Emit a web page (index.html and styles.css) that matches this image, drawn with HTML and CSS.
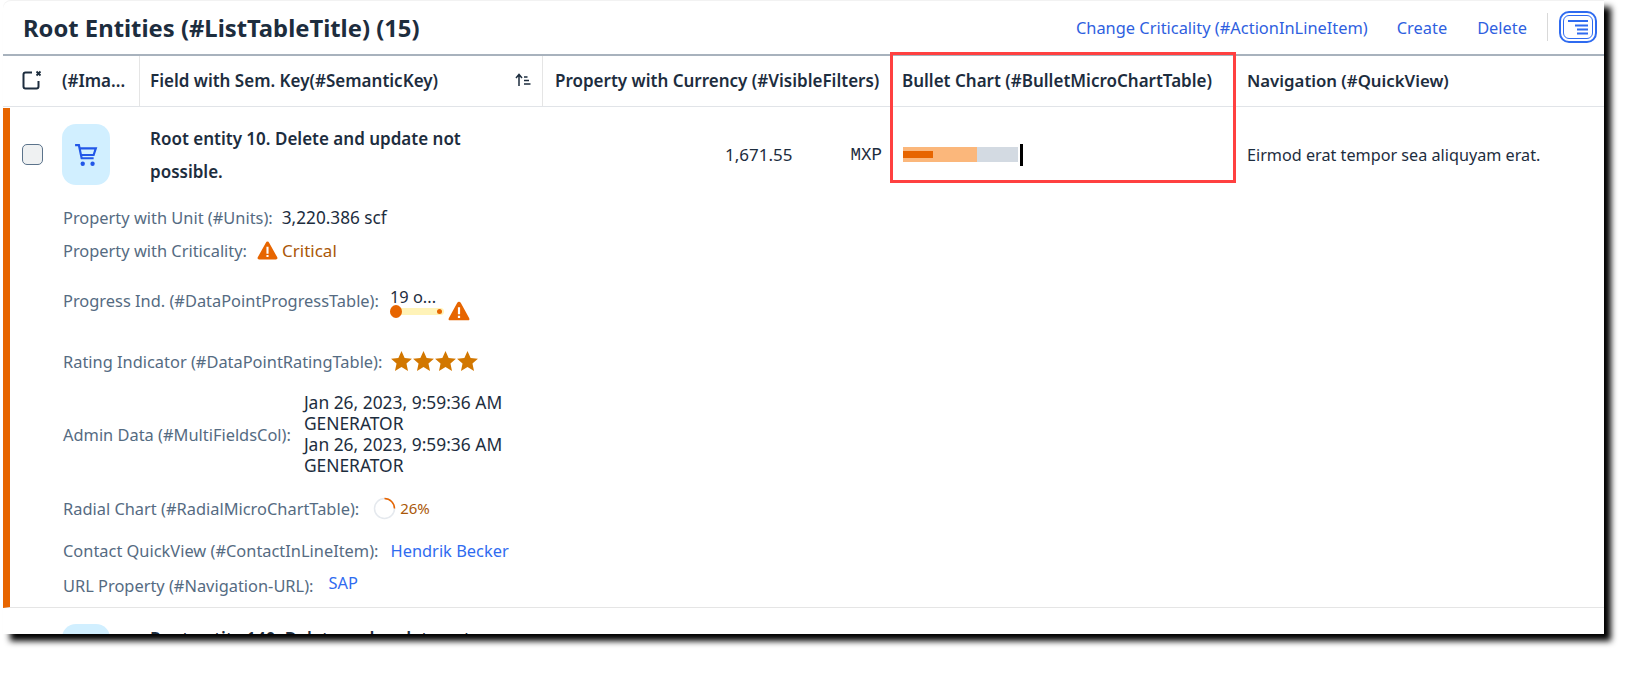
FILE: index.html
```html
<!DOCTYPE html>
<html lang="en">
<head>
<meta charset="utf-8">
<title>Root Entities</title>
<link rel="stylesheet" href="styles.css">
</head>
<body>
<main class="panel">
  <header class="toolbar">
    <h1 class="title">Root Entities (#ListTableTitle) (15)</h1>
    <nav class="actions">
      <a class="action">Change Criticality (#ActionInLineItem)</a>
      <a class="action">Create</a>
      <a class="action">Delete</a>
      <span class="tsep"></span>
      <button class="viewbtn" aria-label="View settings">
        <svg width="20" height="15" viewBox="0 0 20 15"><path d="M0 1h20M7 5.500h13M9 9.500h11M9 13.500h11" stroke="#2f6bf0" stroke-width="2" fill="none"/></svg>
      </button>
    </nav>
  </header>

  <div class="cols head">
    <div class="hcell first">
      <svg class="clear" width="21" height="20" viewBox="0 0 21 20"><path d="M10 2.500H3.500Q1.500 2.500 1.500 4.500V16.500Q1.500 18.500 3.500 18.500H14.500Q16.500 18.500 16.500 16.500V11" stroke="#1d2d3e" stroke-width="2" fill="none"/><path d="M14.500 1.500l4 4M18.500 1.500l-4 4" stroke="#1d2d3e" stroke-width="1.800"/></svg>
      <span class="imgh">(#Ima...</span>
    </div>
    <div class="hcell key">
      <span>Field with Sem. Key(#SemanticKey)</span>
      <svg width="16" height="14" viewBox="0 0 16 14"><path d="M4 13V2M1 5l3-3.500L7 5" stroke="#1d2d3e" stroke-width="1.500" fill="none"/><path d="M9 4h3.500M9 7.500h5M9 11h6.500" stroke="#1d2d3e" stroke-width="1.300"/></svg>
    </div>
    <div class="hcell wide">Property with Currency (#VisibleFilters)</div>
    <div class="hcell">Bullet Chart (#BulletMicroChartTable)</div>
    <div class="hcell last">Navigation (#QuickView)</div>
  </div>

  <section class="row critical">
    <div class="cols main">
      <div class="cell first">
        <span class="check"></span>
        <span class="avatar">
          <svg width="24" height="24" viewBox="0 0 22 22"><path d="M1 2h3.500L7 14h11M5 5h15l-2 6H6.500" stroke="#2257e8" stroke-width="2" fill="none"/><circle cx="8" cy="19" r="2" fill="#2257e8"/><circle cx="17" cy="19" r="2" fill="#2257e8"/></svg>
        </span>
      </div>
      <div class="cell name">Root entity 10. Delete and update not possible.</div>
      <div class="cell money"><span>1,671.55</span><span class="cur">MXP</span></div>
      <div class="cell bullet">
        <div class="bar">
          <span class="range"></span>
          <span class="value"></span>
          <span class="target"></span>
        </div>
      </div>
      <div class="cell nav">Eirmod erat tempor sea aliquyam erat.</div>
    </div>
    <div class="details">
      <div class="d d-unit"><span class="l">Property with Unit (#Units):</span><span class="v">3,220.386 scf</span></div>
      <div class="d d-crit"><span class="l">Property with Criticality:</span>
        <svg class="warn" width="21" height="19" viewBox="0 0 20 18"><path d="M10 .5Q11 .500 11.700 1.800L19.300 15.500Q20 17.500 18 17.500H2Q0 17.500 .7 15.500L8.300 1.800Q9 .5 10 .5Z" fill="#e76500"/><path d="M9 5.500h2v6.500H9zM9 13.300h2v2H9z" fill="#fff"/></svg>
        <span class="crit">Critical</span></div>
      <div class="d d-prog"><span class="l">Progress Ind. (#DataPointProgressTable):</span>
        <div class="prog">
          <span class="ptext">19 o...</span>
          <span class="ptrack"><i class="pstart"></i><i class="pend"></i></span>
        </div>
        <svg class="warn pw" width="22" height="20" viewBox="0 0 20 18"><path d="M10 .5Q11 .500 11.700 1.800L19.300 15.500Q20 17.500 18 17.500H2Q0 17.500 .7 15.500L8.300 1.800Q9 .5 10 .5Z" fill="#e76500"/><path d="M9 5.500h2v6.500H9zM9 13.300h2v2H9z" fill="#fff"/></svg>
      </div>
      <div class="d d-rate"><span class="l">Rating Indicator (#DataPointRatingTable):</span>
        <span class="stars">
          <svg width="21" height="20" viewBox="0 0 24 23"><path d="M12 0l3.600 8 8.400.8-6.300 5.700L19.500 23 12 18.500 4.500 23l1.800-8.500L0 8.800 8.400 8z" fill="#d27700"/></svg>
          <svg width="21" height="20" viewBox="0 0 24 23"><path d="M12 0l3.600 8 8.400.8-6.300 5.700L19.500 23 12 18.500 4.500 23l1.800-8.500L0 8.800 8.400 8z" fill="#d27700"/></svg>
          <svg width="21" height="20" viewBox="0 0 24 23"><path d="M12 0l3.600 8 8.400.8-6.300 5.700L19.500 23 12 18.500 4.500 23l1.800-8.500L0 8.800 8.400 8z" fill="#d27700"/></svg>
          <svg width="21" height="20" viewBox="0 0 24 23"><path d="M12 0l3.600 8 8.400.8-6.300 5.700L19.500 23 12 18.500 4.500 23l1.800-8.500L0 8.800 8.400 8z" fill="#d27700"/></svg>
        </span></div>
      <div class="d d-admin"><span class="l">Admin Data (#MultiFieldsCol):</span>
        <div class="multi"><span>Jan 26, 2023, 9:59:36 AM</span><span>GENERATOR</span><span>Jan 26, 2023, 9:59:36 AM</span><span>GENERATOR</span></div></div>
      <div class="d d-radial"><span class="l">Radial Chart (#RadialMicroChartTable):</span>
        <svg class="radial" width="23" height="23" viewBox="0 0 23 23"><circle cx="11.500" cy="11.500" r="10" fill="none" stroke="#e5e9ee" stroke-width="1.500"/><path d="M11.500 1.500A10 10 0 0 1 21.500 11.500" fill="none" stroke="#e76500" stroke-width="1.500"/></svg>
        <span class="pct">26%</span></div>
      <div class="d d-contact"><span class="l">Contact QuickView (#ContactInLineItem):</span><a class="link">Hendrik Becker</a></div>
      <div class="d d-url"><span class="l">URL Property (#Navigation-URL):</span><a class="link sap">SAP</a></div>
    </div>
  </section>

  <section class="row nextrow">
    <div class="cols main">
      <div class="cell first"><span class="avatar"></span></div>
      <div class="cell name">Root entity 140. Delete and update not possible.</div>
    </div>
  </section>

  <div class="highlight"></div>
</main>
</body>
</html>
```
FILE: styles.css
```css
* { box-sizing: border-box; }
html, body { margin: 0; background: #fff; }
body {
  padding: 0 0 0 3px;
  font-family: "Noto Sans", "Liberation Sans", sans-serif;
  font-size: 16.4px;
  color: #1d2d3e;
  height: 674px;
  overflow: hidden;
}
.panel {
  position: relative;
  width: 1601px;
  height: 634px;
  overflow: hidden;
  background: #fff;
  border-top-left-radius: 8px;
  box-shadow: 7px 7px 6px #000, inset 0 1px 0 #f2f2f2;
}
.toolbar {
  height: 56px;
  display: flex;
  align-items: center;
  justify-content: space-between;
  padding: 0 7px 0 20px;
  border-bottom: 2px solid #a8b2bd;
}
.title { margin: 0; padding-top: 2px; font-size: 23.800px; font-weight: 700; }
.actions { display: flex; align-items: center; }
.action { color: #2f5fe0; margin-right: 29px; }
.action:nth-child(2) { margin-right: 30px; }
.action:nth-child(3) { margin-right: 20px; }
.tsep { width: 1px; height: 28px; background: #d9d9d9; margin-right: 11px; }
.viewbtn {
  width: 38px;
  height: 32px;
  padding: 0;
  background: #fff;
  border: 2px solid #2f6bf0;
  outline: 1px solid #2f6bf0;
  outline-offset: -5px;
  border-radius: 10px;
  display: flex;
  align-items: center;
  justify-content: center;
}
.cols {
  display: grid;
  grid-template-columns: 137px 403px 348px 345px 1fr;
}
.head { height: 51px; border-bottom: 1px solid #e1e4e8; }
.hcell {
  display: flex;
  align-items: center;
  padding: 0 11px 2px;
  font-size: 17px;
  font-weight: 600;
  border-right: 1px solid #e5e5e5;
  white-space: nowrap;
}
.hcell.first { padding: 0 0 2px 19px; }
.hcell.last { border-right: 0; font-size: 16.800px; }
.hcell.wide { padding-left: 12px; }
.imgh { margin-left: 19px; }
.key { justify-content: space-between; padding-left: 10px; }
.row { border-bottom: 1px solid #e5e5e5; }
.critical {
  margin-top: 1px;
  height: 500px;
  border-left: 7px solid #e76500;
}
.main { height: 93px; margin-left: -7px; }
.cell { display: flex; align-items: center; padding: 0 11px; }
.cell.first { padding: 0 0 0 19px; }
.check {
  width: 21px;
  height: 21px;
  background: #eff1f2;
  border: 1px solid #5b738b;
  border-radius: 5px;
  margin-right: 19px;
}
.avatar {
  width: 48px;
  height: 61px;
  background: #d1efff;
  border-radius: 14px;
  display: flex;
  align-items: center;
  justify-content: center;
}
.name { font-size: 17px; font-weight: 600; line-height: 33px; padding: 0 60px 0 10px; }
.money { justify-content: flex-end; padding-right: 9px; font-size: 17px; }
.cur { margin-left: 58px; font-family: "Liberation Mono", monospace; font-size: 17.500px; }
.bullet { padding-left: 12px; }
.nav { font-size: 16.200px; white-space: nowrap; }
.bar { position: relative; width: 121px; height: 22px; }
.range {
  position: absolute;
  left: 0;
  top: 3px;
  width: 115px;
  height: 15px;
  background: linear-gradient(90deg, #fbb77b 0 74px, #d3dae2 74px);
}
.value { position: absolute; left: 0; top: 7px; width: 30px; height: 7px; background: #e76500; }
.target { position: absolute; left: 117px; top: 0; width: 3px; height: 22px; background: #000; }
.details { display: flex; flex-direction: column; padding-left: 53px; }
.d { display: flex; align-items: center; }
.l { color: #556b82; white-space: nowrap; }
.v { margin-left: 9px; font-size: 17.200px; }
.d-unit, .d-crit { height: 33px; }
.d-prog { height: 67px; }
.d-rate { height: 54px; }
.d-admin { height: 92px; }
.d-radial { height: 56px; }
.d-contact { height: 28px; }
.d-url { height: 43px; }
.warn { margin-left: 10px; }
.crit { margin-left: 4px; font-size: 17px; color: #aa5808; }
.prog { display: flex; flex-direction: column; width: 60px; margin-left: 11px; }
.ptext { line-height: 20px; }
.ptrack {
  position: relative;
  display: block;
  height: 7px;
  margin-top: 1px;
  background: #fff3b8;
  border-radius: 4px;
  width: 54px;
}
.pstart { position: absolute; left: 0; top: -3px; width: 12px; height: 13px; border-radius: 50%; background: #e76500; }
.pend { position: absolute; right: 2px; top: 1px; width: 5px; height: 5px; border-radius: 50%; background: #e76500; }
.pw { margin-left: -2px; margin-top: 20px; }
.stars { display: flex; gap: 1px; margin-left: 9px; }
.multi { display: flex; flex-direction: column; margin-left: 13px; line-height: 21px; font-size: 17.400px; }
.radial { margin-left: 14px; }
.pct { margin-left: 4px; font-size: 15px; color: #aa5808; }
.link { color: #2f6bf0; margin-left: 12px; }
.sap { margin: -6px 0 0 15px; }
.nextrow { border-bottom: 0; padding-top: 14px; }
.nextrow .main { margin-left: 0; }
.nextrow .cell { align-items: flex-start; }
.nextrow .avatar { margin: 2px 0 0 40px; }
.nextrow .name { display: block; }
.highlight {
  position: absolute;
  left: 887px;
  top: 52px;
  width: 346px;
  height: 131px;
  border: 3px solid #ff4040;
}
```
